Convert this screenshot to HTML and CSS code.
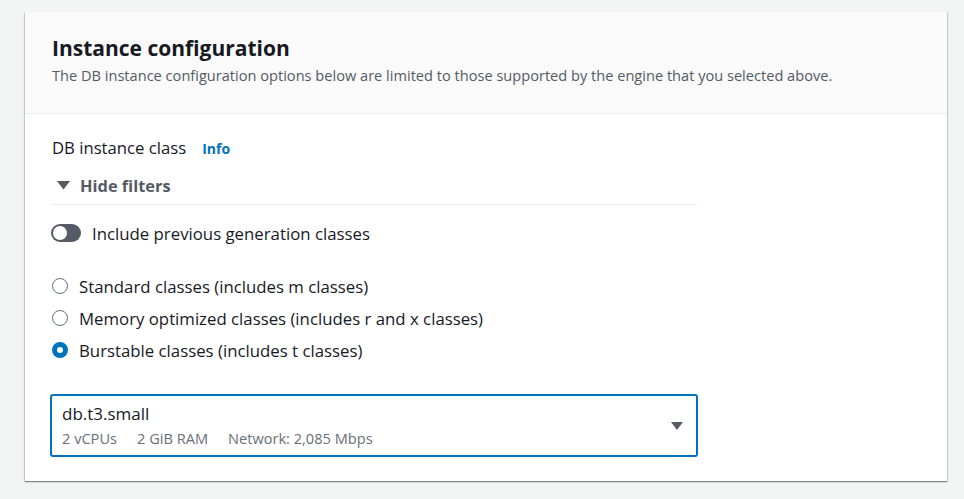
FILE: index.html
```html
<!DOCTYPE html>
<html>
<head>
<meta charset="utf-8">
<link rel="stylesheet" href="styles.css">
</head>
<body>
<div class="page">
  <section class="card">
    <header class="card-header">
      <h2 class="title">Instance configuration</h2>
      <p class="desc">The DB instance configuration options below are limited to those supported by the engine that you selected above.</p>
    </header>
    <div class="card-body">
      <div class="label-row">
        <span class="label">DB instance class</span>
        <a class="info">Info</a>
      </div>
      <div class="filters">
        <div class="filters-head">
          <svg class="tri" width="13" height="10" viewBox="0 0 13 10"><path d="M0 1h13L6.5 9.5z" fill="#545b64"/></svg>
          <span>Hide filters</span>
        </div>
      </div>
      <div class="toggle-row">
        <span class="toggle"><span class="knob"></span></span>
        <span class="toggle-label">Include previous generation classes</span>
      </div>
      <div class="radios">
        <div class="radio-row"><span class="radio"></span><span>Standard classes (includes m classes)</span></div>
        <div class="radio-row"><span class="radio"></span><span>Memory optimized classes (includes r and x classes)</span></div>
        <div class="radio-row"><span class="radio checked"></span><span>Burstable classes (includes t classes)</span></div>
      </div>
      <div class="select">
        <div class="select-text">
          <div class="select-main">db.t3.small</div>
          <div class="select-sub"><span>2 vCPUs</span><span>2 GiB RAM</span><span>Network: 2,085 Mbps</span></div>
        </div>
        <svg class="caret" width="12" height="10" viewBox="0 0 12 10"><path d="M0 1h12L6 9z" fill="#545b64"/></svg>
      </div>
    </div>
  </section>
</div>
</body>
</html>
```

FILE: styles.css
```css
* { box-sizing: border-box; }
html, body { margin: 0; padding: 0; }
body {
  background: #f2f3f3;
  font-family: "Open Sans", "Noto Sans", sans-serif;
  color: #16191f;
}
.page {
  padding: 12px 17px 18px 25px;
}
.card {
  background: #ffffff;
  width: 922px;
  box-shadow: 0 1px 1px 0 rgba(0,28,36,.3), 1px 1px 1px 0 rgba(0,28,36,.15), -1px 1px 1px 0 rgba(0,28,36,.15);
}
.card-header {
  background: #fafafa;
  border-bottom: 1px solid #eaeded;
  padding: 22px 27px 0 27px;
  height: 102px;
}
.title {
  margin: 0;
  font-size: 21px;
  line-height: 28px;
  font-weight: 700;
  color: #16191f;
}
.desc {
  margin: 3px 0 0 0;
  font-size: 14.6px;
  line-height: 20px;
  color: #545b64;
}
.card-body {
  padding: 22px 27px 24px 27px;
}
.label-row {
  display: flex;
  align-items: baseline;
  gap: 16px;
  height: 24px;
  line-height: 24px;
}
.label {
  font-size: 16.7px;
  color: #16191f;
}
.info {
  font-size: 14px;
  font-weight: 700;
  color: #0073bb;
}
.filters {
  width: 645px;
  border-bottom: 1px solid #eaeded;
  margin-top: 13px;
  padding-bottom: 7px;
}
.filters-head {
  display: flex;
  align-items: center;
  gap: 10px;
  font-size: 16.4px;
  font-weight: 700;
  color: #545b64;
  height: 24px;
  padding-left: 5px;
}
.toggle-row {
  display: flex;
  align-items: center;
  gap: 11px;
  margin-top: 16px;
  height: 24px;
}
.toggle {
  width: 30px;
  height: 18px;
  border-radius: 9px;
  background: #545b64;
  display: flex;
  align-items: center;
  padding-left: 2px;
  margin-left: -1px;
}
.knob {
  width: 14px;
  height: 14px;
  border-radius: 50%;
  background: #ffffff;
}
.toggle-label {
  font-size: 16.8px;
  color: #16191f;
}
.radios {
  margin-top: 29px;
  display: flex;
  flex-direction: column;
  gap: 8px;
}
.radio-row {
  display: flex;
  align-items: center;
  gap: 11px;
  height: 24px;
  font-size: 16.8px;
  color: #16191f;
}
.radio {
  width: 16px;
  height: 16px;
  border-radius: 50%;
  border: 1.5px solid #687078;
  background: #fff;
  flex: none;
}
.radio.checked {
  border: 5px solid #0073bb;
}
.select {
  margin-top: 32px;
  margin-left: -2px;
  width: 648px;
  height: 63px;
  border: 2px solid #0073bb;
  border-radius: 3px;
  display: flex;
  align-items: center;
  padding: 0 13px 0 10px;
}
.select-text { flex: 1; }
.select-main {
  font-size: 17px;
  line-height: 22px;
  color: #16191f;
}
.select-sub {
  font-size: 14.6px;
  line-height: 20px;
  color: #687078;
  display: flex;
  gap: 20px;
  margin-top: 3px;
}
.caret { flex: none; }
```
